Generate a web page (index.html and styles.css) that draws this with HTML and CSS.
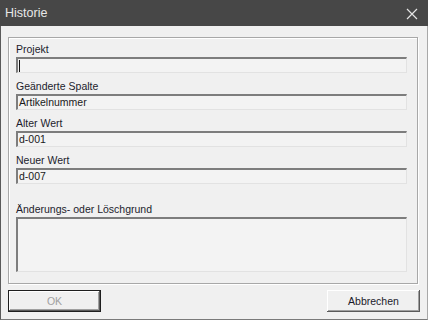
FILE: index.html
```html
<!DOCTYPE html>
<html lang="de">

<head>
    <meta charset="UTF-8">
    <meta name="viewport" content="width=device-width, initial-scale=1.0">
    <title>Historie</title>
    <link rel="stylesheet" href="styles.css">
</head>

<body>
    <div class="window">
        <div class="titlebar">
            <span class="title">Historie</span>
            <svg class="close" width="12" height="12" viewBox="0 0 12 12">
                <path d="M1 1 L11 11 M11 1 L1 11" stroke="#e4e4e4" stroke-width="1.2" fill="none" />
            </svg>
        </div>

        <div class="content">
            <div class="group">
                <div class="field">
                    <label class="field__label">Projekt</label>
                    <div class="field__input"><span class="caret"></span></div>
                </div>

                <div class="field">
                    <label class="field__label">Geänderte Spalte</label>
                    <div class="field__input">Artikelnummer</div>
                </div>

                <div class="field">
                    <label class="field__label">Alter Wert</label>
                    <div class="field__input">d-001</div>
                </div>

                <div class="field">
                    <label class="field__label">Neuer Wert</label>
                    <div class="field__input">d-007</div>
                </div>

                <div class="field field--reason">
                    <label class="field__label">Änderungs- oder Löschgrund</label>
                    <div class="field__input field__input--area"></div>
                </div>
            </div>

            <div class="buttons">
                <button class="btn btn--default" disabled>OK</button>
                <button class="btn">Abbrechen</button>
            </div>
        </div>
    </div>
</body>

</html>
```

FILE: styles.css
```css
/* dialog window */
* {
    box-sizing: border-box;
}

body {
    margin: 0;
    background-color: #f0f0f0;
    font-family: "Liberation Sans", Arial, sans-serif;
}

.window {
    width: 428px;
    height: 320px;
    display: flex;
    flex-direction: column;
}

.titlebar {
    height: 26px;
    background-color: #474747;
    display: flex;
    align-items: center;
    justify-content: space-between;
    padding: 0 10px 0 5px;
}

.title {
    color: #e8e8e8;
    font-size: 12.5px;
}

.close {
    display: block;
    margin-top: 1px;
}

.content {
    flex: 1;
    background-color: #f0f0f0;
    border-left: 1px solid #5a5a5a;
    border-right: 1px solid #a8a8a8;
    border-bottom: 1px solid #7a7a7a;
    padding: 11px 0 0 7px;
}

/* group box */
.group {
    margin-right: 9px;
    border: 1px solid #a8a8a8;
    box-shadow: inset 1px 1px 0 #ffffff, 1px 1px 0 #ffffff;
    padding: 5px 10px 11px 7px;
}

.field {
    margin-bottom: 7px;
}

.field--reason {
    margin-top: 19px;
    margin-bottom: 0;
}

.field__label {
    display: block;
    height: 13px;
    line-height: 13px;
    margin-bottom: 1px;
    font-size: 10.5px;
    color: #1c1c2c;
}

.field__input {
    height: 16px;
    background-color: #f3f3f3;
    border-top: 2px solid #7d7d7d;
    border-left: 2px solid #7d7d7d;
    border-right: 1px solid #e2e2e2;
    border-bottom: 1px solid #e2e2e2;
    padding-left: 1px;
    font-size: 10.5px;
    line-height: 13px;
    color: #1a1a1a;
    display: flex;
    align-items: center;
}

.field__input--area {
    height: 55px;
}

.caret {
    width: 1px;
    height: 12px;
    background-color: #111;
}

/* buttons */
.buttons {
    display: flex;
    justify-content: space-between;
    margin-top: 6px;
    margin-right: 7px;
}

.btn {
    width: 93px;
    height: 22px;
    border: none;
    background-color: #f0f0f0;
    font-family: inherit;
    font-size: 10.5px;
    color: #1a1a2a;
    padding: 0;
    box-shadow: inset -1px -1px 0 #5a5a5a, inset 1px 1px 0 #ffffff, inset -2px -2px 0 #a0a0a0;
}

.btn--default {
    border: 1px solid #1e1e1e;
    color: #a0a0a0;
}
```
